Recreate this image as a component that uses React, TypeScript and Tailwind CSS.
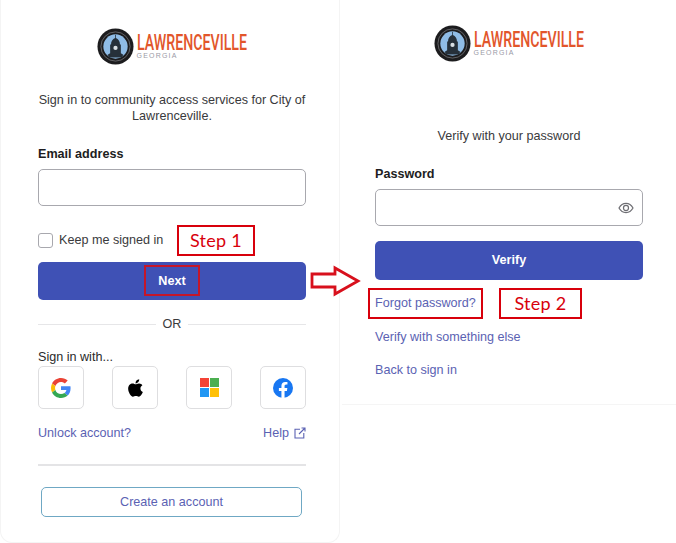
import type { ReactNode } from "react";

const Logo = () => (
    <div className="flex items-center h-[38px] w-[151px]">
        <svg width="37" height="37" viewBox="0 0 38 38" className="shrink-0">
            <circle cx="19" cy="19" r="18.500" fill="#1c1c1e" />
            <circle cx="19" cy="19" r="15" fill="none" stroke="#77777a" strokeWidth="0.800" />
            <circle cx="19" cy="19" r="12.500" fill="#8fbce6" />
            <path d="M18.600 7h.8v3.200c2.600.8 4.200 3.500 4.200 6.800h.9v9l2.500 1.500-1.500 2.700H12.500L11 27.500l2.500-1.500v-9h.9c0-3.300 1.600-6 4.200-6.800z" fill="#26303a" />
            <circle cx="19" cy="20.500" r="2.200" fill="#d9dfe4" />
        </svg>
        <div className="ml-[3px] flex flex-col w-[111px]">
            <span className="h-[18px] text-[22.500px] leading-[18px] font-['Roboto',sans-serif] font-medium text-[#e2562b] whitespace-nowrap origin-left scale-x-[0.63]">
                LAWRENCEVILLE
            </span>
            <span className="mt-[1px] text-[7px] leading-[7px] tracking-[1.200px] text-[#9a9aa6] font-['Liberation_Sans',sans-serif]">
                GEORGIA
            </span>
        </div>
    </div>
);

const Google = () => (
    <svg width="20" height="20" viewBox="0 0 48 48">
        <path fill="#EA4335" d="M24 9.500c3.540 0 6.710 1.220 9.210 3.600l6.850-6.850C35.900 2.380 30.470 0 24 0 14.620 0 6.510 5.380 2.560 13.220l7.980 6.190C12.430 13.720 17.740 9.500 24 9.500z" />
        <path fill="#4285F4" d="M46.980 24.550c0-1.570-.15-3.090-.38-4.550H24v9.020h12.940c-.58 2.960-2.260 5.480-4.780 7.180l7.730 6c4.510-4.180 7.090-10.360 7.090-17.650z" />
        <path fill="#FBBC05" d="M10.530 28.590c-.48-1.450-.76-2.990-.76-4.590s.27-3.140.76-4.590l-7.980-6.190C.92 16.460 0 20.120 0 24c0 3.880.92 7.540 2.560 10.780l7.970-6.190z" />
        <path fill="#34A853" d="M24 48c6.480 0 11.930-2.130 15.890-5.810l-7.730-6c-2.150 1.450-4.920 2.300-8.160 2.300-6.260 0-11.570-4.220-13.470-9.910l-7.980 6.190C6.510 42.620 14.620 48 24 48z" />
    </svg>
);

const Apple = () => (
    <svg width="17" height="20" viewBox="0 0 384 512" fill="#000">
        <path d="M318.700 268.700c-.2-36.700 16.400-64.400 50-84.800-18.800-26.900-47.200-41.700-84.700-44.600-35.500-2.800-74.300 20.700-88.500 20.700-15 0-49.400-19.700-76.400-19.700C63.300 141.200 4 184.800 4 273.500q0 39.300 14.400 81.200c12.800 36.700 59 126.700 107.200 125.200 25.200-.6 43-17.900 75.800-17.900 31.800 0 48.300 17.900 76.400 17.900 48.600-.7 90.400-82.500 102.600-119.300-65.200-30.700-61.700-90-61.700-91.900zm-56.600-164.200c27.300-32.400 24.800-61.900 24-72.500-24.100 1.400-52 16.400-67.900 34.900-17.500 19.800-27.800 44.300-25.600 71.900 26.100 2 49.900-11.400 69.500-34.300z" />
    </svg>
);

const Microsoft = () => (
    <div className="grid grid-cols-2 gap-[1px] w-[19px] h-[19px]">
        <div className="bg-[#f44336]" />
        <div className="bg-[#4caf50]" />
        <div className="bg-[#2196f3]" />
        <div className="bg-[#ffc107]" />
    </div>
);

const Facebook = () => (
    <svg width="20" height="20" viewBox="0 0 24 24">
        <circle cx="12" cy="12" r="12" fill="#1877f2" />
        <path fill="#fff" d="M16.670 15.470 17.200 12h-3.330V9.750c0-.95.470-1.870 1.960-1.870h1.510V4.930s-1.370-.23-2.690-.23c-2.740 0-4.530 1.660-4.530 4.670V12H7.080v3.470h3.040V24a12 12 0 0 0 3.750 0v-8.530z" />
    </svg>
);

const SocialButton = ({ children }: { children: ReactNode }) => (
    <div className="w-[46px] h-[43px] flex items-center justify-center rounded-[5px] border border-[#dedee0] bg-white">
        {children}
    </div>
);

const StepBox = ({ label, className }: { label: string; className: string }) => (
    <div className={`absolute flex items-center justify-center border-2 border-[#d8000c] text-[#d8000c] text-[18px] tracking-[0.3px] font-['Lato',sans-serif] ${className}`}>
        {label}
    </div>
);

export default function App() {
    return (
        <div className="relative flex w-[676px] h-[543px] bg-white overflow-hidden font-['Liberation_Sans',sans-serif] text-[12.600px] text-[#2a2a2a]">
            {/* sign in card */}
            <div className="w-[340px] h-[543px] shrink-0 flex flex-col pl-[37px] pr-[33px] pt-[27px] border border-t-0 border-[#f4f4f4] rounded-b-[12px]">
                <div className="flex justify-center">
                    <Logo />
                </div>
                <p className="mt-[27px] -mx-1 text-center leading-[16px] text-[#3a3a3c]">
                    Sign in to community access services for City of Lawrenceville.
                </p>
                <label className="mt-[22px] leading-[16px] font-bold text-[#1d1d21]">Email address</label>
                <div className="mt-[7px] h-[37px] rounded-[5px] border border-[#a8a8ae] bg-white" />
                <div className="mt-[25px] flex items-center h-[18px]">
                    <div className="w-[15px] h-[15px] rounded-[3px] border border-[#a8a8ae]" />
                    <span className="ml-[6px] text-[#3a3a3c]">Keep me signed in</span>
                </div>
                <button className="mt-[13px] h-[38px] rounded-[5px] bg-[#3f51b5] text-white font-bold">Next</button>
                <div className="mt-[15px] flex items-center gap-[7px] h-[18px]">
                    <div className="flex-1 h-px bg-[#e6e6e8]" />
                    <span className="text-[#3a3a3c]">OR</span>
                    <div className="flex-1 h-px bg-[#e6e6e8]" />
                </div>
                <p className="mt-[16px] leading-[16px] text-[#2a2a2a]">Sign in with...</p>
                <div className="mt-[1px] flex justify-between">
                    <SocialButton><Google /></SocialButton>
                    <SocialButton><Apple /></SocialButton>
                    <SocialButton><Microsoft /></SocialButton>
                    <SocialButton><Facebook /></SocialButton>
                </div>
                <div className="mt-[16px] flex justify-between items-center leading-[16px] text-[#5b62b3]">
                    <span>Unlock account?</span>
                    <span className="flex items-center gap-[5px]">
                        Help
                        <svg width="12" height="12" viewBox="0 0 12 12" fill="none" stroke="#5b62b3" strokeWidth="1.100">
                            <path d="M6 2.200H1v8.800h8.800V6M5 7l6-6M7.500 1H11v3.500" />
                        </svg>
                    </span>
                </div>
                <div className="mt-[23px] h-[2px] bg-[#e4e4e6]" />
                <div className="mt-[21px] ml-[3px] mr-[4px] h-[30px] flex items-center justify-center rounded-[5px] border border-[#6fa8c4] text-[#5b62b3]">
                    Create an account
                </div>
            </div>

            {/* verify card */}
            <div className="ml-[2px] flex-1 h-[405px] flex flex-col px-[33px] pt-[24px] border-b border-[#f5f5f5]">
                <div className="flex justify-center">
                    <Logo />
                </div>
                <p className="mt-[66px] text-center leading-[16px] text-[#3a3a3c]">Verify with your password</p>
                <label className="mt-[22px] leading-[16px] font-bold text-[#1d1d21]">Password</label>
                <div className="mt-[7px] h-[37px] rounded-[5px] border border-[#a8a8ae] bg-white flex items-center justify-end pr-[8px]">
                    <svg width="16" height="16" viewBox="0 0 24 24" fill="none" stroke="#6e6e73" strokeWidth="1.800">
                        <path d="M1.500 12C4 7.500 7.500 5.200 12 5.200S20 7.500 22.500 12C20 16.500 16.500 18.800 12 18.800S4 16.500 1.500 12z" />
                        <circle cx="12" cy="12" r="3.800" />
                    </svg>
                </div>
                <button className="mt-[15px] h-[39px] rounded-[5px] bg-[#3f51b5] text-white font-bold">Verify</button>
                <div className="mt-[15px] flex flex-col leading-[16px] text-[#5b62b3]">
                    <span>Forgot password?</span>
                    <span className="mt-[18px]">Verify with something else</span>
                    <span className="mt-[17px]">Back to sign in</span>
                </div>
            </div>

            {/* annotations */}
            <StepBox label="Step 1" className="left-[177px] top-[225px] w-[78px] h-[31px]" />
            <div className="absolute left-[144px] top-[265px] w-[56px] h-[31px] border-[2px] border-[#c4162a]" />
            <div className="absolute left-[368px] top-[288px] w-[115px] h-[31px] border-2 border-[#d8000c]" />
            <StepBox label="Step 2" className="left-[499px] top-[288px] w-[83px] h-[31px]" />
            <svg className="absolute left-[309px] top-[265px]" width="54" height="32" viewBox="0 0 54 32" fill="#fff" stroke="#d8101c" strokeWidth="2.800">
                <path d="M3 9h23V3l23 13-23 13v-7H3z" />
            </svg>
        </div>
    );
}
